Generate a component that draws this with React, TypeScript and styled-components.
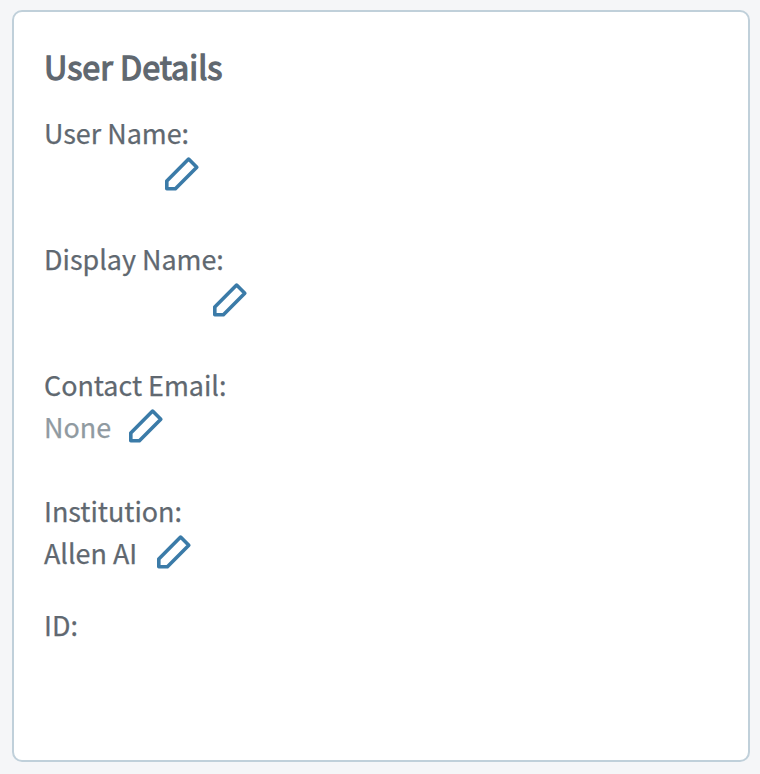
import React from "react";
import styled, { createGlobalStyle } from "styled-components";

const GlobalStyle = createGlobalStyle`
  * { box-sizing: border-box; }
  html, body { margin: 0; background: #f5f6f8; }
`;

const Page = styled.main`
  height: 774px;
  padding: 10px 10px 12px 12px;
  color: #606870;
  font-family: "Source Sans Pro", "Noto Sans CJK SC", sans-serif;
  font-size: 26.9px;
  line-height: 42px;
  -webkit-text-stroke: 0.25px currentColor;
`;

const Card = styled.section`
  height: 100%;
  padding: 29px 30px;
  background: #fff;
  border: 2px solid #c0d0da;
  border-radius: 10px;
`;

const Title = styled.h1`
  margin: 0 0 21px;
  font-size: 32.3px;
  line-height: 50px;
  font-weight: 400;
  -webkit-text-stroke-width: 1.3px;
  white-space: nowrap;
`;

const Fields = styled.dl`
  margin: 0;
`;

const Field = styled.div<{ $gap?: number }>`
  margin-bottom: ${({ $gap = 42 }) => $gap}px;
`;

const Label = styled.dt`
  width: max-content;
`;

const Value = styled.dd<{ $width: number; $muted?: boolean }>`
  display: flex;
  height: 42px;
  margin: 0;
  color: ${({ $muted }) => ($muted ? "#909aa1" : "inherit")};

  > span {
    width: ${({ $width }) => $width}px;
    white-space: nowrap;
  }
`;

const EditButton = styled.button`
  display: flex;
  width: 36px;
  height: 36px;
  margin-top: 2px;
  padding: 0;
  border: 0;
  background: none;
  color: #3b7ba8;
`;

const Pencil = () => (
  <svg width="36" height="36" viewBox="0 0 36 36" fill="none" stroke="currentColor" strokeWidth="3.6">
    <path d="M24.6 3.1 32.8 11.3 11.4 32.7H2.8V24.9Z" strokeLinejoin="round" />
  </svg>
);

type DetailProps = { label: string; value: string; width: number; muted?: boolean; gap?: number };

const Detail = ({ label, value, width, muted, gap }: DetailProps) => (
  <Field $gap={gap}>
    <Label>{label}:</Label>
    <Value $width={width} $muted={muted}>
      <span>{value}</span>
      <EditButton aria-label={`Edit ${label}`}><Pencil /></EditButton>
    </Value>
  </Field>
);

export default function App() {
  return (
    <Page>
      <GlobalStyle />
      <Card>
        <Title>User Details</Title>
        <Fields>
          <Detail label="User Name" value="" width={120} />
          <Detail label="Display Name" value="" width={168} />
          <Detail label="Contact Email" value="None" width={84} muted />
          <Detail label="Institution" value="Allen AI" width={112} gap={30} />
          <Field>
            <Label>ID:</Label>
          </Field>
        </Fields>
      </Card>
    </Page>
  );
}
